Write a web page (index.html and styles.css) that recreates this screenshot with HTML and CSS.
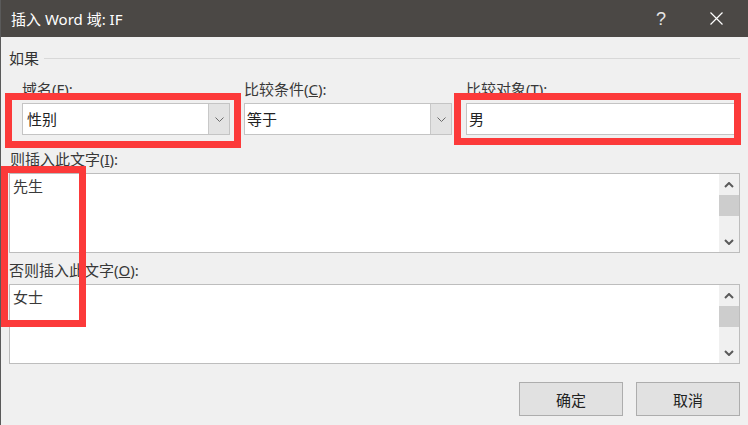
FILE: index.html
```html
<!DOCTYPE html>
<html lang="zh-CN">

<head>
    <meta charset="UTF-8">
    <meta name="viewport" content="width=device-width, initial-scale=1.0">
    <title>插入 Word 域: IF</title>
    <link rel="stylesheet" href="styles.css">
</head>

<body>
    <div class="dialog">
        <div class="titlebar">
            <span class="title">插入 Word 域: IF</span>
            <span class="tb-help">?</span>
            <span class="tb-close">
                <svg width="13" height="13" viewBox="0 0 13 13">
                    <path d="M0.5 0.5 L12.5 12.5 M12.5 0.5 L0.5 12.5" stroke="#fff" stroke-width="1.2" fill="none"/>
                </svg>
            </span>
        </div>

        <div class="body">
            <div class="group-title">
                <span>如果</span>
                <span class="group-line"></span>
            </div>

            <div class="cond-row">
                <div class="field">
                    <label class="lbl">域名(<u>F</u>):</label>
                    <div class="combo">
                        <span class="combo-text">性别</span>
                        <span class="combo-btn">
                            <svg width="9" height="5" viewBox="0 0 9 5"><path d="M0.5 0.5 L4.5 4.5 L8.5 0.5" stroke="#6a6a6a" fill="none"/></svg>
                        </span>
                    </div>
                </div>
                <div class="field">
                    <label class="lbl">比较条件(<u>C</u>):</label>
                    <div class="combo">
                        <span class="combo-text tight">等于</span>
                        <span class="combo-btn">
                            <svg width="9" height="5" viewBox="0 0 9 5"><path d="M0.5 0.5 L4.5 4.5 L8.5 0.5" stroke="#6a6a6a" fill="none"/></svg>
                        </span>
                    </div>
                </div>
                <div class="field">
                    <label class="lbl">比较对象(<u>T</u>):</label>
                    <div class="textbox">男</div>
                </div>
            </div>

            <label class="lbl lbl-wide">则插入此文字(<u>I</u>):</label>
            <div class="memo">
                <div class="memo-text">先生</div>
                <div class="vscroll">
                    <span class="sb-btn">
                        <svg width="10" height="6" viewBox="0 0 10 6"><path d="M1 5 L5 1 L9 5" stroke="#5a5a5a" stroke-width="2" fill="none"/></svg>
                    </span>
                    <span class="sb-thumb"></span>
                    <span class="sb-track"></span>
                    <span class="sb-btn">
                        <svg width="10" height="6" viewBox="0 0 10 6"><path d="M1 1 L5 5 L9 1" stroke="#5a5a5a" stroke-width="2" fill="none"/></svg>
                    </span>
                </div>
            </div>

            <label class="lbl lbl-wide lbl-second">否则插入此文字(<u>O</u>):</label>
            <div class="memo">
                <div class="memo-text">女士</div>
                <div class="vscroll">
                    <span class="sb-btn">
                        <svg width="10" height="6" viewBox="0 0 10 6"><path d="M1 5 L5 1 L9 5" stroke="#5a5a5a" stroke-width="2" fill="none"/></svg>
                    </span>
                    <span class="sb-thumb"></span>
                    <span class="sb-track"></span>
                    <span class="sb-btn">
                        <svg width="10" height="6" viewBox="0 0 10 6"><path d="M1 1 L5 5 L9 1" stroke="#5a5a5a" stroke-width="2" fill="none"/></svg>
                    </span>
                </div>
            </div>

            <div class="actions">
                <button class="btn">确定</button>
                <button class="btn">取消</button>
            </div>
        </div>

        <!-- 红框标注 -->
        <span class="mark mark-field"></span>
        <span class="mark mark-target"></span>
        <span class="mark mark-text"></span>
    </div>
</body>

</html>
```

FILE: styles.css
```css
* {
    box-sizing: border-box;
}

html,
body {
    margin: 0;
    padding: 0;
}

body {
    width: 748px;
    height: 425px;
    overflow: hidden;
    background: #f0f0f0;
    font-family: "Noto Sans", "Noto Sans CJK SC", sans-serif;
    color: #333;
}

.dialog {
    position: relative;
    height: 425px;
    background: #f0f0f0;
    border-left: 1px solid #5a5a5a;
}

.titlebar {
    display: flex;
    align-items: center;
    height: 37px;
    padding-left: 10px;
    background: #4b4845;
    color: #fff;
    font-size: 15px;
}

.titlebar .title {
    flex: 1;
    line-height: 20px;
}

.tb-help {
    width: 30px;
    margin-right: 18px;
    text-align: center;
    font-family: "Liberation Sans", sans-serif;
    font-size: 18px;
    line-height: 20px;
    color: #e6e6e6;
}

.tb-close {
    display: flex;
    justify-content: center;
    width: 45px;
    margin-right: 9px;
}

.body {
    padding: 11px 8px 0 8px;
    font-size: 15px;
}

.group-title {
    display: flex;
    align-items: center;
    height: 20px;
    line-height: 20px;
}

.group-line {
    flex: 1;
    height: 1px;
    margin-left: 5px;
    background: #d8d8d8;
}

.cond-row {
    display: grid;
    grid-template-columns: 208px 208px 1fr;
    column-gap: 14px;
    margin-top: 11px;
    padding-left: 13px;
}

.lbl {
    display: block;
    height: 20px;
    line-height: 20px;
    margin-bottom: 4px;
    color: #383838;
}

.lbl-wide {
    margin-top: 14px;
    padding-left: 1px;
}

.lbl-second {
    margin-top: 7px;
    padding-left: 0;
}

.combo {
    display: flex;
    height: 32px;
    background: #fff;
    border: 1px solid #c4c4c4;
}

.combo-text {
    flex: 1;
    padding-left: 4px;
    line-height: 30px;
    color: #222;
}

.combo-text.tight {
    padding-left: 2px;
}

.combo-btn {
    display: flex;
    align-items: center;
    justify-content: center;
    width: 21px;
    background: #e3e3e3;
    border-left: 1px solid #c8c8c8;
}

.textbox {
    height: 32px;
    padding-left: 2px;
    line-height: 30px;
    background: #fff;
    border: 1px solid #c4c4c4;
    color: #222;
}

.memo {
    display: flex;
    height: 80px;
    background: #fff;
    border: 1px solid #bdbdbd;
}

.memo-text {
    flex: 1;
    padding: 2px 0 0 3px;
    line-height: 20px;
    color: #3a3a3a;
}

.vscroll {
    display: flex;
    flex-direction: column;
    width: 20px;
    background: #f0f0f0;
}

.sb-btn {
    display: flex;
    align-items: center;
    justify-content: center;
    height: 21px;
}

.sb-thumb {
    height: 21px;
    background: #cdcdcd;
}

.sb-track {
    flex: 1;
}

.actions {
    display: flex;
    justify-content: flex-end;
    gap: 13px;
    margin-top: 18px;
}

.btn {
    width: 104px;
    height: 34px;
    padding: 0;
    background: #e1e1e1;
    border: 1px solid #adadad;
    font-family: inherit;
    font-size: 15px;
    color: #222;
}

/* 标注框 */
.mark {
    position: absolute;
    border: 7px solid #fc3a3a;
}

.mark-field {
    left: 4px;
    top: 93px;
    width: 236px;
    height: 55px;
}

.mark-target {
    left: 453px;
    top: 93px;
    width: 287px;
    height: 52px;
}

.mark-text {
    left: 0;
    top: 166px;
    width: 85px;
    height: 161px;
}
```
